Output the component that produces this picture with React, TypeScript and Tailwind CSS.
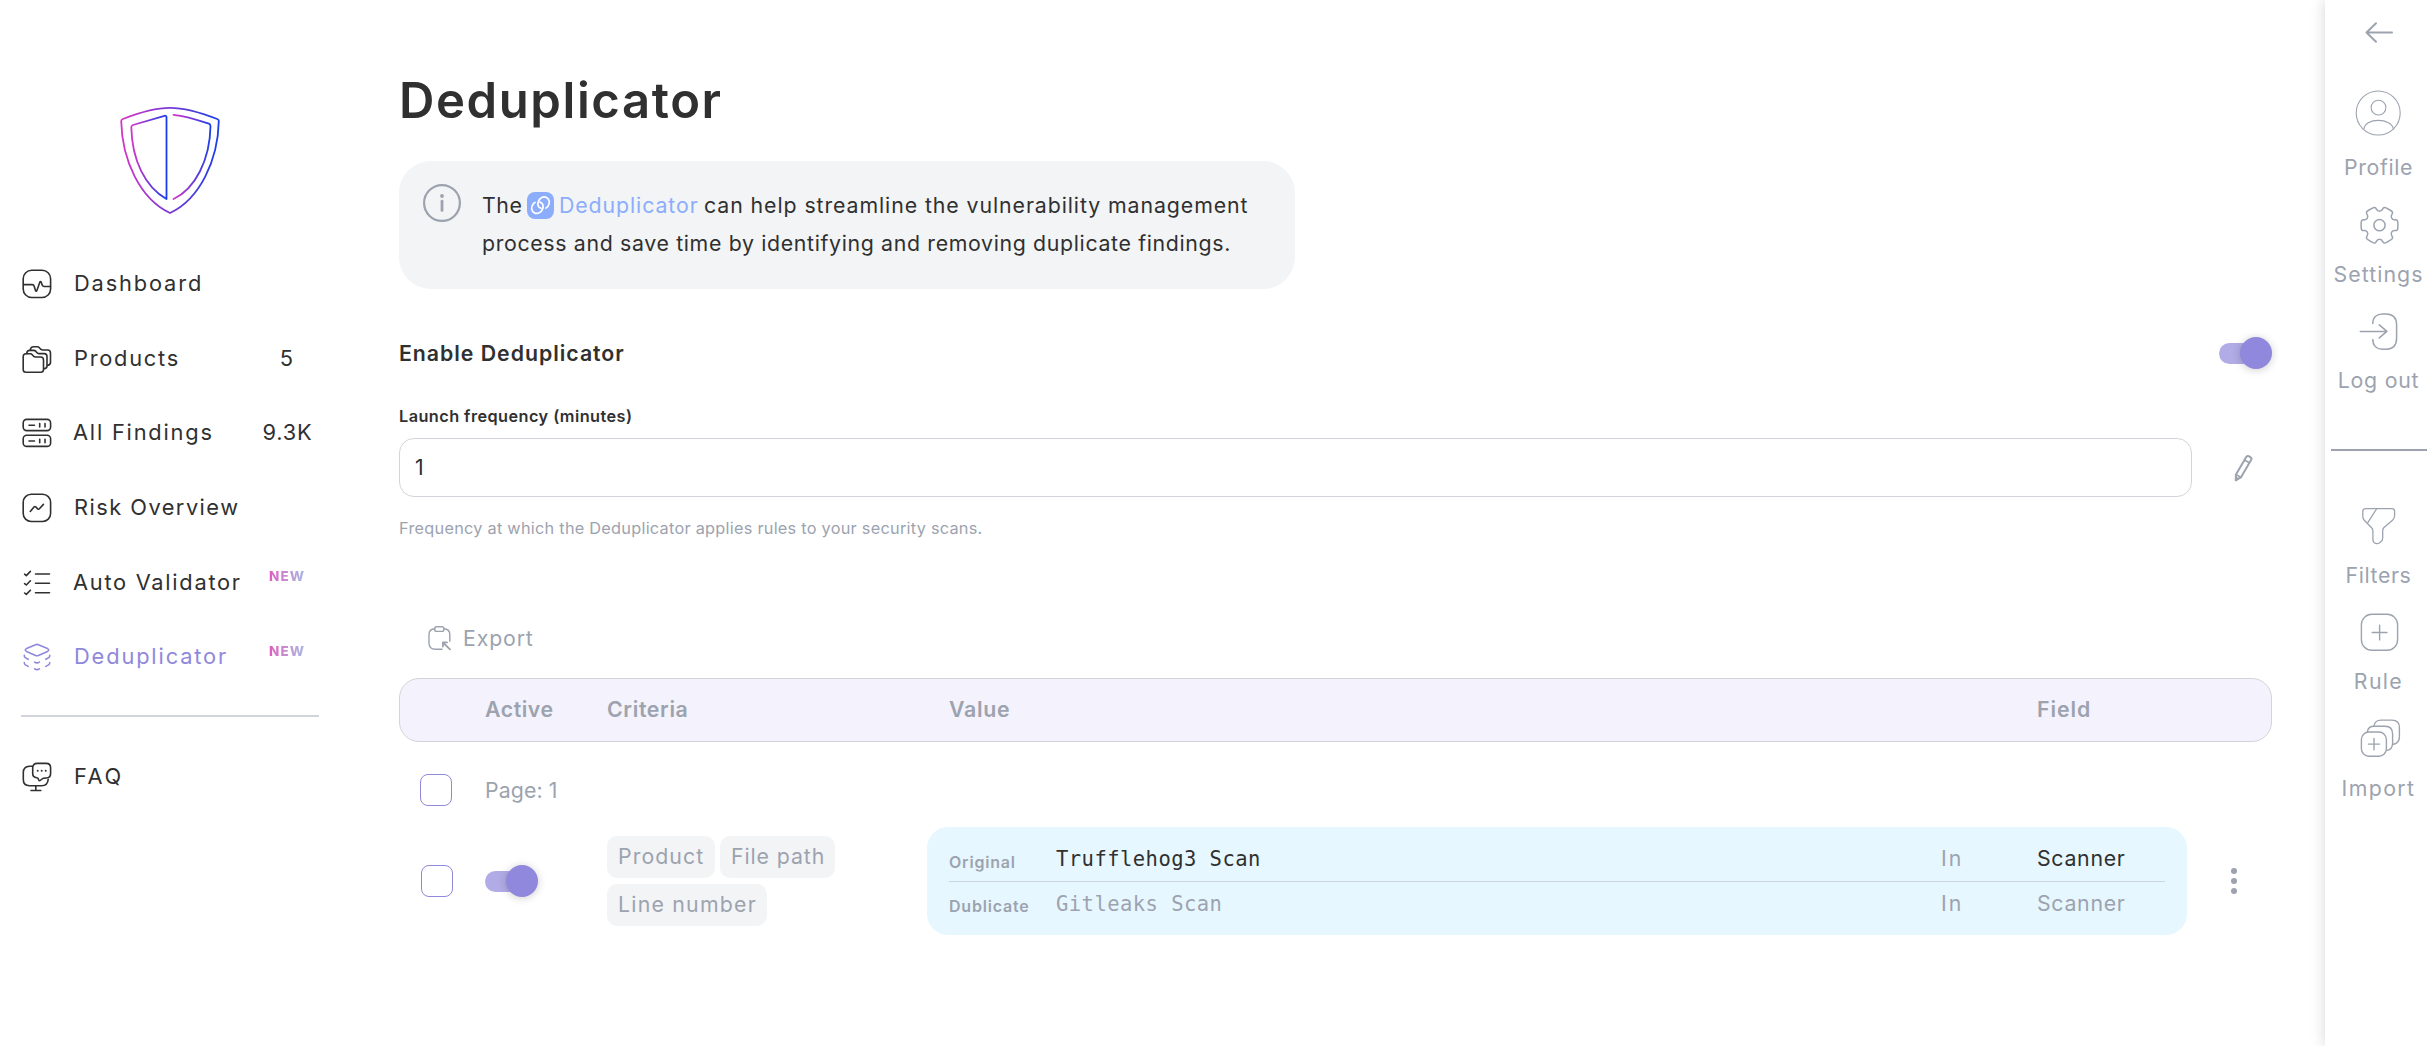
import React from "react";

type IconProps = { children: React.ReactNode; size: number; sw?: number; className?: string };

function Icon({ children, size, sw = 1.5, className = "" }: IconProps) {
  return (
    <svg
      width={size}
      height={size}
      viewBox={`0 0 ${size} ${size}`}
      fill="none"
      stroke="currentColor"
      strokeWidth={sw}
      strokeLinecap="round"
      strokeLinejoin="round"
      className={`block shrink-0 ${className}`}
    >
      {children}
    </svg>
  );
}

function Logo() {
  return (
    <svg width="108" height="120" viewBox="116 100 108 120" fill="none" strokeWidth="1.8" strokeLinecap="round" className="block">
      <defs>
        <linearGradient id="brand" x1="0" y1="0" x2="1" y2="0">
          <stop offset="0" stopColor="#d535c6" />
          <stop offset="1" stopColor="#1a3fe8" />
        </linearGradient>
      </defs>
      <g stroke="url(#brand)">
        <path d="M170 107.8C154 107.8 138 113 122.8 119Q121.2 119.7 121.2 121C122 160 140 199 170 213C200 199 218 160 218.8 121Q218.8 119.7 217.2 119C202 113 186 107.8 170 107.8Z" />
        <path d="M166.5 199V117.2Q166.3 115.3 164.5 115.8L133 125Q131.3 125.7 131.3 127.2C132 160 145 187 166.5 199" />
        <path d="M173.5 114.8C186 116 198 120 208.8 123.7Q210.5 124.4 210.5 126C210 160 195 189 173.5 199" />
      </g>
    </svg>
  );
}

const GEAR = (() => {
  const pts: [number, number][] = [];
  const at = (deg: number, r: number): [number, number] => [24.5 + r * Math.cos((deg * Math.PI) / 180), 24.2 + r * Math.sin((deg * Math.PI) / 180)];
  for (let k = 0; k < 6; k++) {
    pts.push(at(k * 60 - 17, 19.2), at(k * 60 + 17, 19.2), at(k * 60 + 21, 14.2), at(k * 60 + 39, 14.2));
  }
  const toward = (a: [number, number], b: [number, number], d: number) => {
    const l = Math.hypot(b[0] - a[0], b[1] - a[1]);
    const t = Math.min(d / l, 0.5);
    return `${(a[0] + (b[0] - a[0]) * t).toFixed(2)} ${(a[1] + (b[1] - a[1]) * t).toFixed(2)}`;
  };
  return (
    pts
      .map((p, i) => {
        const prev = pts[(i + pts.length - 1) % pts.length];
        const next = pts[(i + 1) % pts.length];
        return `${i ? "L" : "M"}${toward(p, prev, 3.2)}Q${p[0].toFixed(2)} ${p[1].toFixed(2)} ${toward(p, next, 3.2)}`;
      })
      .join("") + "Z"
  );
})();

const nav = [
  {
    label: "Dashboard",
    text: "tracking-[1.85px]",
    icon: (
      <>
        <rect x="1.2" y="1.3" width="27.4" height="27.2" rx="8.5" />
        <path d="M1.5 15.6H10.3Q11.6 15.6 12.1 17L13.5 21.6Q14.2 23 14.9 21.4L17.8 13.2Q18.5 11.8 19.2 13.2L20.3 16.2Q20.8 17.5 22.2 17.5H28.5" />
      </>
    ),
  },
  {
    label: "Products",
    text: "tracking-[1.75px]",
    count: "5",
    icon: (
      <>
        <path d="M1.2 12.6Q1.2 9.8 4 9.8H8Q9.5 9.8 10.5 11L11.8 12.4Q12.4 13 13.5 13H18.7Q21.5 13 21.5 16V25.5Q21.5 28.3 18.7 28.3H4Q1.2 28.3 1.2 25.5Z" />
        <path d="M4.7 9.6Q4.9 6.4 7.8 6.4H11.6Q13 6.4 14 7.6L15.4 9Q16 9.6 17 9.6H22.3Q25 9.6 25 12.6V22Q25 24.4 22 24.8" />
        <path d="M8.3 6Q8.6 2.8 11.6 2.8H15.2Q16.6 2.8 17.6 4L19 5.4Q19.6 6 20.6 6H25.6Q28.5 6 28.5 9V18.3Q28.5 21 25.6 21.4" />
      </>
    ),
  },
  {
    label: "All Findings",
    text: "tracking-[1.8px] -ml-px",
    count: "9.3K",
    icon: (
      <>
        <rect x="1.2" y="1.4" width="27.4" height="11.2" rx="3.5" />
        <rect x="1.2" y="17.2" width="27.4" height="11.2" rx="3.5" />
        <path d="M7 7.2H12.5M17.7 5.5V8.9M23 5.5V8.9M7 23H12.5M17.7 21.3V24.7M23 21.3V24.7" />
      </>
    ),
  },
  {
    label: "Risk Overview",
    text: "tracking-[1.47px]",
    icon: (
      <>
        <rect x="1.2" y="1.3" width="27.4" height="27.2" rx="8" />
        <path d="M8.3 18.5L12 14Q12.8 13.1 13.7 13.9L15.7 15.8Q16.6 16.6 17.4 15.7L21.4 11.4" />
      </>
    ),
  },
  {
    label: "Auto Validator",
    text: "tracking-[1.73px] -ml-px",
    isNew: true,
    icon: (
      <>
        <path d="M13.5 6H27.5M13.5 15.3H27.5M13.5 24.8H27.5" />
        <path d="M2.6 6.2L4.3 7.6L8.4 3.4M2.6 15.6L4.3 17L8.4 12.8M2.6 25L4.3 26.4L8.4 22.2" />
      </>
    ),
  },
  {
    label: "Deduplicator",
    text: "tracking-[1.87px]",
    isNew: true,
    active: true,
    icon: (
      <>
        <path d="M13.6 2.7Q15 2.1 16.4 2.7L25.5 6.6Q28 8 25.5 9.4L16.4 13.4Q15 14 13.6 13.4L4.5 9.4Q2 8 4.5 6.6Z" />
        <path d="M2.3 13.4Q2.1 14.8 3.2 15.6L6.2 17.3M27.7 13.4Q27.9 14.8 26.8 15.6L23.8 17.3M12.6 20.1Q15 21.6 17.4 20.1M2.3 20.6Q2.2 22.2 3.4 22.9L6.2 24.4M27.7 20.6Q27.8 22.2 26.6 22.9L23.8 24.4M12.6 26.9Q15 28.4 17.4 26.9" />
      </>
    ),
  },
];

function NavRow({ item }: { item: (typeof nav)[number] }) {
  return (
    <a className={`flex h-[74.7px] w-[319px] items-center pl-[22px] ${item.active ? "text-[#8f88dc]" : "text-[#303030]"}`}>
      <Icon size={30} sw={1.6}>
        {item.icon}
      </Icon>
      <span className="ml-[22px] w-[184px] whitespace-nowrap text-[21.8px] leading-none">
        <span className={`inline-block ${item.text}`}>{item.label}</span>
      </span>
      {item.count && (
        <span className={`flex w-[61px] justify-center whitespace-nowrap text-[21.8px] leading-none ${item.count.length > 1 ? "-ml-px tracking-[0.8px]" : "-ml-[2px]"}`}>{item.count}</span>
      )}
      {item.isNew && (
        <span className="mb-[12px] ml-[11px] bg-linear-to-r from-[#dc5dbf] to-[#a4b9e2] bg-clip-text text-[13.5px] font-extrabold leading-none tracking-[1.1px] text-transparent">
          NEW
        </span>
      )}
    </a>
  );
}

function Toggle() {
  return (
    <span className="flex h-8 w-[53px] items-center">
      <span className="flex h-[21px] w-[53px] items-center justify-end rounded-full bg-[linear-gradient(to_right,#b1ace6_40px,transparent_40px)]">
        <span className="size-8 rounded-full bg-[#8f88dc] shadow-[0_1px_9px_rgba(0,0,0,0.2)]" />
      </span>
    </span>
  );
}

function Checkbox() {
  return <span className="block size-8 shrink-0 rounded-[8px] border border-[#8f88dc]" />;
}

function Tag({ label, style }: { label: string; style: string }) {
  return <span className={`flex h-[42px] items-center whitespace-nowrap rounded-[10px] bg-[#f3f4f6] pl-[11px] ${style}`}>{label}</span>;
}

function RailItem({ label, style, height, gap, sw, children }: { label: string; style: string; height: string; gap: string; sw: number; children: React.ReactNode }) {
  return (
    <a className={`flex flex-col items-center ${height}`}>
      <Icon size={48} sw={sw}>
        {children}
      </Icon>
      <span className={`whitespace-nowrap leading-6 ${gap} ${style}`}>{label}</span>
    </a>
  );
}

export default function App() {
  return (
    <div className="flex h-[1046px] w-[2430px] overflow-hidden bg-white font-['Inter',sans-serif] text-[21.3px] leading-none text-[#303030]">
      <aside className="flex w-[399px] shrink-0 flex-col pt-[100px]">
        <div className="ml-[116px] h-[146.5px]">
          <Logo />
        </div>
        <nav>
          {nav.map((item) => (
            <NavRow key={item.label} item={item} />
          ))}
        </nav>
        <hr className="ml-[21px] mt-[20.3px] h-[2px] w-[298px] border-0 bg-[#d1d5db]" />
        <a className="mt-[45px] flex h-[30px] items-center pl-[22px]">
          <Icon size={30} sw={1.6}>
            <path d="M10.4 4.3H7.5Q1.3 4.6 1.3 10.5V17.5Q1.3 23.7 7.5 23.7H19.5Q25.8 23.7 26.2 17.2" />
            <path d="M15.2 1.4H24.2Q28.6 1.4 28.6 5.8V11.6Q28.6 16 24.2 16Q21 16 20 17L18.2 18.5Q17.2 19.3 16.7 18L16 16.3Q15.7 15.8 14.7 15.8Q10.7 15.4 10.7 11.6V5.8Q10.7 1.4 15.2 1.4Z" />
            <path d="M13.8 23.7V28.3M9 28.5H18.8" />
            <path d="M15.7 8.6V8.7M19.7 8.6V8.7M23.7 8.6V8.7" strokeWidth="1.9" />
          </Icon>
          <span className="ml-[22px] text-[21.8px] tracking-[2.6px]">FAQ</span>
        </a>
      </aside>

      <main className="flex w-[1873px] shrink-0 flex-col pt-[71px]">
        <h1 className="text-[49px] font-semibold leading-[60px] tracking-[1.6px]">Deduplicator</h1>

        <section className="mt-[30px] flex h-[128px] w-[896px] rounded-[32px] bg-[#f3f4f6] pl-6 pt-[23px]">
          <Icon size={38} sw={2.2} className="text-[#9ca3af]">
            <circle cx="19" cy="19" r="17.9" />
            <path d="M19 17.2V26.4" strokeWidth="2.8" />
            <path d="M19 11.9V12" strokeWidth="3.8" />
          </Icon>
          <div className="ml-[21px] mt-[2px] whitespace-nowrap">
            <p className="flex h-[38px] items-center">
              <span className="w-[45px] pt-px tracking-[0.6px]">The</span>
              <span className="flex size-[27px] items-center justify-center rounded-[8px] bg-[#8badfb] text-white">
                <Icon size={27} sw={1.7}>
                  <path d="M14 16.3C11 15.5 10.3 12.5 11.3 9.5C12.7 5.8 16.5 4 19.5 5.5C23 7.3 23 11.5 20.8 14.4Q20 15.5 19 16" />
                  <path d="M13 10.1C16 10.9 16.7 13.9 15.7 16.9C14.3 20.6 10.5 22.4 7.5 20.9C4 19.1 4 14.9 6.2 12Q7 10.9 8 10.4" />
                </Icon>
              </span>
              <a className="ml-[5px] w-[145px] pt-px tracking-[0.91px] text-[#8badfb]">Deduplicator</a>
              <span className="pt-px tracking-[0.92px]">can help streamline the vulnerability management</span>
            </p>
            <p className="flex h-[38px] items-center pt-px tracking-[0.66px]">process and save time by identifying and removing duplicate findings.</p>
          </div>
        </section>

        <div className="mt-12 flex h-8 items-center justify-between">
          <h2 className="pt-[2px] font-semibold tracking-[0.97px]">Enable Deduplicator</h2>
          <Toggle />
        </div>

        <label className="mt-[37px] text-[16.3px] font-semibold leading-[21px] tracking-[0.44px]">Launch frequency (minutes)</label>
        <div className="mt-[11px] flex h-[59px] items-center">
          <div className="flex h-[59px] w-[1793px] items-center rounded-[15px] border border-[#d1d5db] pl-[15px]">1</div>
          <Icon size={30} sw={2} className="ml-[38px] text-[#9ca3af]">
            <path d="M5.7 27.2L6 21.4L16.2 3.9Q17.1 2.4 18.7 3.2L20.6 4.3Q22 5.2 21.2 6.8L11 24.3Z" />
            <path d="M14.6 7L19.2 9.7M6.2 21.6L10.8 24.2" strokeWidth="1.6" />
            <path d="M6 27.2V24.6L8 25.8Z" fill="currentColor" />
          </Icon>
        </div>
        <p className="mt-[19px] text-[16.3px] leading-6 tracking-[0.26px] text-[#9ca3af]">Frequency at which the Deduplicator applies rules to your security scans.</p>

        <button className="mt-[84px] flex h-7 items-center pl-[27px] text-[#9ca3af]">
          <Icon size={28} sw={1.4}>
            <path d="M8.7 4.8C4.8 5 3 6.8 3 10.5V19C3 23.4 5 25.2 9.3 25.2H16M18 4.8C21.8 5 23.8 6.8 23.8 10.5V17.3" />
            <rect x="8.7" y="2.8" width="9.2" height="4.6" rx="2" />
            <path d="M24 25.3L16.9 18.5M16.9 22.6V18.4H21" strokeWidth="1.8" />
          </Icon>
          <span className="ml-[9px] pt-px tracking-[0.85px]">Export</span>
        </button>

        <div className="mt-[26px] flex h-16 items-center rounded-[20px] border border-[#d3d4da] bg-[#f4f2fc] font-semibold text-[#9ca3af]">
          <span className="ml-[85px] w-[122px] tracking-[0.55px]">Active</span>
          <span className="w-[342px] tracking-[0.65px]">Criteria</span>
          <span className="w-[1088px] tracking-[0.7px]">Value</span>
          <span className="tracking-[0.95px]">Field</span>
        </div>

        <div className="mt-8 flex h-8 items-center pl-[21px]">
          <Checkbox />
          <span className="ml-[33px] pt-px tracking-[0.1px] text-[#9ca3af]">Page: 1</span>
        </div>

        <div className="mt-[21px] flex h-[108px] items-center pl-[22px] text-[#9ca3af]">
          <Checkbox />
          <div className="ml-8 w-[122px]">
            <Toggle />
          </div>
          <div className="flex w-[320px] flex-wrap gap-x-[5px] gap-y-[6px] pr-[80px]">
            <Tag label="Product" style="w-[108px] tracking-[1.07px]" />
            <Tag label="File path" style="w-[115px] tracking-[0.9px]" />
            <Tag label="Line number" style="w-[160px] tracking-[1.22px]" />
          </div>
          <div className="h-[108px] w-[1260px] rounded-[21px] bg-[#e7f7ff] px-[22px] pt-[10px]">
            <div className="flex h-[45px] items-center border-b border-[#cbd5df]">
              <span className="w-[107px] pt-[5px] text-[16px] font-semibold tracking-[0.8px]">Original</span>
              <span className="w-[885px] font-['DejaVu_Sans_Mono',monospace] tracking-[0.46px] text-[#303030]"><span className="text-[20.5px]">Trufflehog3 Scan</span></span>
              <span className="w-[96px] tracking-[2px]">In</span>
              <span className="tracking-[0.7px] text-[#303030]">Scanner</span>
            </div>
            <div className="flex h-[43px] items-center">
              <span className="w-[107px] pt-[4px] text-[16px] font-semibold tracking-[0.8px]">Dublicate</span>
              <span className="w-[885px] font-['DejaVu_Sans_Mono',monospace] tracking-[0.46px]"><span className="text-[20.5px]">Gitleaks Scan</span></span>
              <span className="w-[96px] tracking-[2px]">In</span>
              <span className="tracking-[0.7px]">Scanner</span>
            </div>
          </div>
          <div className="ml-11 flex flex-col gap-1">
            <span className="size-[6px] rounded-full bg-[#9ca3af]" />
            <span className="size-[6px] rounded-full bg-[#9ca3af]" />
            <span className="size-[6px] rounded-full bg-[#9ca3af]" />
          </div>
        </div>
      </main>

      <aside className="ml-[53px] flex w-[105px] shrink-0 flex-col items-center bg-white pl-[2px] pt-[18px] text-[#9ca3af] shadow-[0_0_14px_rgba(0,0,0,0.17)]">
        <Icon size={30} sw={2}>
          <path d="M28 14.5H2.5M12 5.2L2.5 14.5L12 23.8" />
        </Icon>
        <div className="mt-[40.5px] flex flex-col items-center">
          <RailItem label="Profile" style="tracking-[0.65px]" height="h-[112px]" gap="mt-[18px]" sw={1.1}>
            <circle cx="24.2" cy="24" r="22" />
            <circle cx="24.5" cy="18.6" r="7.4" />
            <path d="M9.9 40C10.5 34.6 16.5 31.4 24.3 31.4C32 31.4 38.6 34.6 39.4 40" />
          </RailItem>
          <RailItem label="Settings" style="tracking-[1.05px]" height="h-[107.5px]" gap="mt-[13.5px]" sw={1.5}>
            <path d={GEAR} />
            <circle cx="24.5" cy="24.2" r="5.6" />
          </RailItem>
          <RailItem label="Log out" style="tracking-[0.75px]" height="h-[84px]" gap="mt-[12px]" sw={1.5}>
            <path d="M18.8 15.5C18.8 9 23 6 28.5 6H32C39 6 42.6 10 42.6 17V30C42.6 37 39 41.2 32 41.2H28.5C23 41.2 18.8 38 18.8 31.5" />
            <path d="M6.3 23.4H32.7M25.3 16.9L32.9 23.4L25.3 29.9" />
          </RailItem>
        </div>
        <hr className="mt-[57px] h-[2px] w-[96px] shrink-0 border-0 bg-[#9ca3af]" />
        <div className="mt-[51px] flex flex-col items-center">
          <RailItem label="Filters" style="tracking-[0.62px]" height="h-[106px]" gap="mt-[13px]" sw={1.3}>
            <path d="M11.5 6.7H38Q40.6 6.7 40.6 9.4V13.5Q40.6 16.5 38.5 18.3L30 25.5Q28.7 26.7 28.7 28.5V36Q28.7 38.5 26.5 40L25.3 41Q23.5 42 21.5 41.3Q18.9 40.5 18.9 37.5V29Q18.9 27 17.6 25.8L10.5 18.5Q8.8 16.7 8.8 14.5V9.4Q8.8 6.7 11.5 6.7Z" />
            <path d="M22.5 7L13.8 20.6" />
          </RailItem>
          <RailItem label="Rule" style="tracking-[1.35px]" height="h-[106px]" gap="mt-[13px]" sw={1.4}>
            <rect x="6.4" y="6.3" width="36.2" height="36" rx="10.5" />
            <path d="M17.2 24.5H32M24.6 17.1V31.9" />
          </RailItem>
          <RailItem label="Import" style="tracking-[1.4px]" height="h-[106px]" gap="mt-[14px]" sw={1.4}>
            <rect x="6.4" y="18" width="25" height="24.3" rx="7.5" />
            <path d="M13.4 30.1H24.6M19 24.5V35.7" />
            <path d="M12.4 17.7Q13.2 12.3 19 12.3H30Q37.6 12.3 37.6 20V29.5Q37.4 35.4 32 36.4" />
            <path d="M19 12Q19.8 6.1 26 6.1H37Q44.4 6.1 44.4 13.5V23Q44.4 29 38.6 30.3" />
          </RailItem>
        </div>
      </aside>
    </div>
  );
}
